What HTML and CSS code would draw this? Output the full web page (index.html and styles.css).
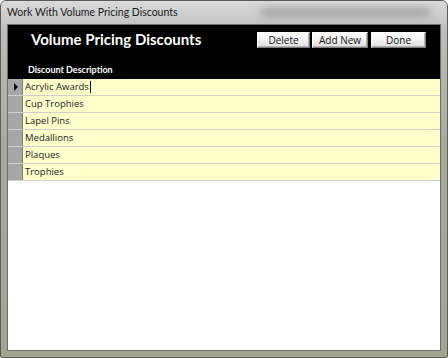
FILE: index.html
```html
<!DOCTYPE html>
<html lang="en">
<head>
  <meta charset="UTF-8" />
  <title>Work With Volume Pricing Discounts</title>
  <link rel="stylesheet" href="styles.css">
</head>
<body>
  <div class="window">
    <div class="titlebar">
      <span class="window-title">Work With Volume Pricing Discounts</span>
      <span class="glass-blur"></span>
    </div>

    <div class="client">
      <div class="header">
        <div class="header-top">
          <h1>Volume Pricing Discounts</h1>
          <div class="buttons">
            <button class="btn btn-delete">Delete</button>
            <button class="btn btn-add">Add New</button>
            <button class="btn btn-done">Done</button>
          </div>
        </div>
        <div class="col-label">Discount Description</div>
      </div>

      <div class="grid">
        <div class="row current">
          <div class="selector"><span class="arrow"></span></div>
          <div class="cell">Acrylic Awards<span class="caret"></span></div>
        </div>
        <div class="row">
          <div class="selector"></div>
          <div class="cell">Cup Trophies</div>
        </div>
        <div class="row">
          <div class="selector"></div>
          <div class="cell">Lapel Pins</div>
        </div>
        <div class="row">
          <div class="selector"></div>
          <div class="cell">Medallions</div>
        </div>
        <div class="row">
          <div class="selector"></div>
          <div class="cell">Plaques</div>
        </div>
        <div class="row">
          <div class="selector"></div>
          <div class="cell">Trophies</div>
        </div>
      </div>
    </div>
  </div>
</body>
</html>
```

FILE: styles.css
```css
html, body {
  margin: 0;
  padding: 0;
  background: #fff;
}

body {
  font-family: Lato, "Open Sans", sans-serif;
}

.window {
  width: 448px;
  height: 358px;
  box-sizing: border-box;
  display: flex;
  flex-direction: column;
  padding: 0 6px 6px 6px;
  border: 1px solid #5a5d56;
  border-radius: 6px 6px 2px 2px;
  background: linear-gradient(to bottom, #c9c9c9 0%, #bdbdbd 8%, #a9aa9d 40%, #a3a594 100%);
}

.titlebar {
  position: relative;
  height: 23px;
  display: flex;
  align-items: center;
  background: linear-gradient(to bottom, #dadada, #c4c4c4);
  margin: 0 -6px;
  padding: 0 6px;
  border-radius: 5px 5px 0 0;
}

.window-title {
  font-family: Lato, sans-serif;
  font-size: 10.5px;
  color: #1a1a1a;
  margin-top: -1px;
}

/* blurred desktop stuff showing through the glass */
.glass-blur {
  position: absolute;
  left: 260px;
  top: 7px;
  width: 170px;
  height: 9px;
  border-radius: 5px;
  background: #8e8e8e;
  filter: blur(4px);
  opacity: 0.7;
}

.client {
  flex: 1;
  display: flex;
  flex-direction: column;
  background: #fff;
  border: 1px solid #6f7268;
}

.header {
  height: 54px;
  box-sizing: border-box;
  background: #000;
  padding: 6px 0 0 20px;
  display: flex;
  flex-direction: column;
}

.header-top {
  display: flex;
  align-items: flex-start;
}

h1 {
  margin: -2px 0 0 3px;
  width: 226px;
  font-size: 15px;
  line-height: 20px;
  font-weight: bold;
  color: #fff;
}

.buttons {
  display: flex;
  gap: 2px;
  padding-top: 1px;
}

.btn {
  height: 16px;
  padding: 0;
  font-family: "Open Sans", sans-serif;
  font-size: 10px;
  line-height: 13px;
  color: #111;
  background: linear-gradient(to bottom, #ffffff 0%, #f2f2f2 50%, #dcdcdc 100%);
  border: 1px solid;
  border-color: #fff #7d7d7d #7d7d7d #fff;
  box-shadow: inset -1px -1px 0 #b5b5b5;
}

.btn-delete { width: 53px; }
.btn-add { width: 56px; }
.btn-done { width: 55px; margin-left: 1px; }

.col-label {
  margin-top: auto;
  padding: 0 0 3px 0;
  font-size: 9px;
  line-height: 12px;
  font-weight: bold;
  color: #fff;
}

.grid {
  display: flex;
  flex-direction: column;
}

.row {
  display: flex;
  height: 17px;
  box-sizing: border-box;
  border-bottom: 1px solid #cfcfc6;
}

.selector {
  width: 15px;
  box-sizing: border-box;
  background: #a6a6a6;
  border-right: 1px solid #7c7c7c;
  display: flex;
  align-items: center;
  justify-content: center;
}

.arrow {
  width: 0;
  height: 0;
  border-top: 4px solid transparent;
  border-bottom: 4px solid transparent;
  border-left: 4px solid #000;
  margin-left: 1px;
}

.cell {
  flex: 1;
  background: #ffffcc;
  padding-left: 2px;
  font-family: "Open Sans", sans-serif;
  font-size: 9.5px;
  line-height: 16px;
  color: #1a1a24;
  display: flex;
  align-items: center;
}

.caret {
  display: inline-block;
  width: 1px;
  height: 12px;
  background: #000;
  margin-left: 1px;
}
```
